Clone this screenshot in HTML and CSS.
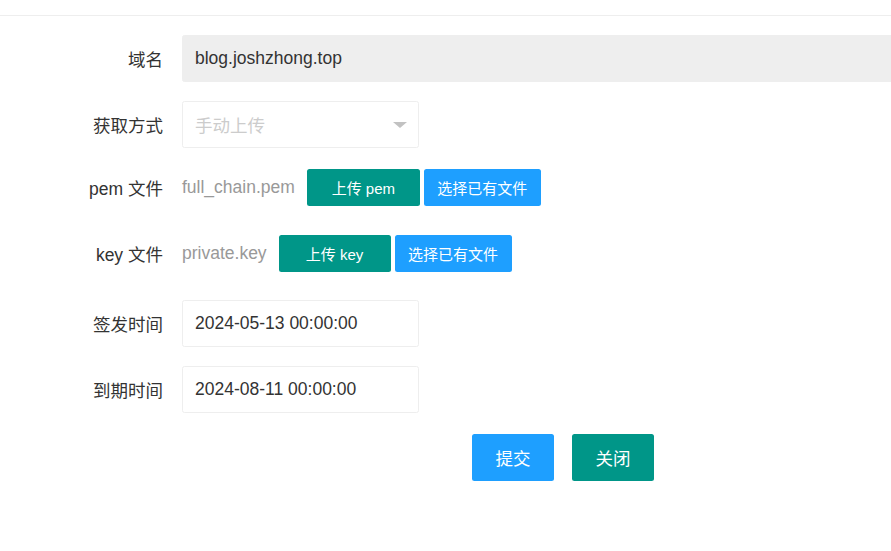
FILE: index.html
```html
<!DOCTYPE html>
<html lang="zh-CN">
<head>
<meta charset="utf-8">
<title>证书</title>
<link rel="stylesheet" href="styles.css">
</head>
<body>
<div class="topline"></div>
<form class="form">
  <div class="row r1">
    <label class="label">域名</label>
    <div class="input input-wide disabled">blog.joshzhong.top</div>
  </div>
  <div class="row r2">
    <label class="label">获取方式</label>
    <div class="input select">
      <span class="placeholder">手动上传</span>
      <span class="arrow"></span>
    </div>
  </div>
  <div class="row r3 short">
    <label class="label">pem 文件</label>
    <span class="filename">full_chain.pem</span>
    <div class="btns">
      <button type="button" class="btn btn-sm teal w113">上传 pem</button>
      <button type="button" class="btn btn-sm blue w117">选择已有文件</button>
    </div>
  </div>
  <div class="row r4 short">
    <label class="label">key 文件</label>
    <span class="filename">private.key</span>
    <div class="btns">
      <button type="button" class="btn btn-sm teal w112">上传 key</button>
      <button type="button" class="btn btn-sm blue w117">选择已有文件</button>
    </div>
  </div>
  <div class="row r5">
    <label class="label">签发时间</label>
    <div class="input">2024-05-13 00:00:00</div>
  </div>
  <div class="row r6">
    <label class="label">到期时间</label>
    <div class="input">2024-08-11 00:00:00</div>
  </div>
  <div class="row r7 actions">
    <button type="button" class="btn btn-lg blue">提交</button>
    <button type="button" class="btn btn-lg teal">关闭</button>
  </div>
</form>
</body>
</html>
```
FILE: styles.css
```css
html, body {
  margin: 0;
  padding: 0;
  background: #fff;
  overflow: hidden;
}
body {
  font-family: "Liberation Sans", "Noto Sans CJK SC", sans-serif;
  font-size: 17.5px;
  color: #333;
}
.topline {
  margin-top: 15px;
  height: 1px;
  background: #eeeeee;
}
.form {
  display: flex;
  flex-direction: column;
  padding-top: 19px;
}
.row {
  display: flex;
  align-items: center;
  height: 47px;
  white-space: nowrap;
}
.row.short { height: 37px; }
.r2 { margin-top: 19px; }
.r3 { margin-top: 21px; }
.r4 { margin-top: 29px; }
.r5 { margin-top: 28px; }
.r6 { margin-top: 19px; }
.r7 { margin-top: 21px; }
.label {
  width: 163px;
  margin-right: 19px;
  text-align: right;
  color: #333;
  flex-shrink: 0;
}
.input {
  box-sizing: border-box;
  width: 237px;
  height: 47px;
  border: 1px solid #eeeeee;
  border-radius: 2.5px;
  padding: 0 12px;
  display: flex;
  align-items: center;
  color: #333;
  flex-shrink: 0;
}
.input-wide {
  width: 740px;
}
.disabled {
  background: #eeeeee;
}
.select {
  justify-content: space-between;
  padding-right: 11px;
}
.placeholder { color: #cccccc; }
.arrow {
  width: 0;
  height: 0;
  border-left: 7px solid transparent;
  border-right: 7px solid transparent;
  border-top: 6px solid #c2c2c2;
  margin-top: 1px;
}
.filename {
  color: #999999;
  margin-right: 12px;
}
.btns {
  display: flex;
  gap: 4px;
}
.btn {
  font-family: inherit;
  border: none;
  border-radius: 2.5px;
  color: #fff;
  padding: 0;
  display: flex;
  align-items: center;
  justify-content: center;
  cursor: pointer;
}
.btn-sm {
  height: 37px;
  font-size: 15px;
}
.w113 { width: 113px; }
.w112 { width: 112px; }
.w117 { width: 117px; }
.btn-lg {
  height: 47px;
  width: 82px;
  font-size: 17.5px;
}
.teal { background: #009688; }
.blue { background: #1e9fff; }
.actions {
  padding-left: 472px;
  gap: 18px;
}
```
